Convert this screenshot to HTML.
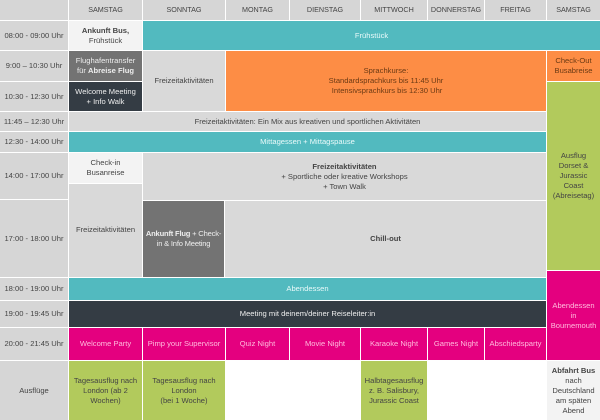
<!DOCTYPE html><html><head><meta charset="utf-8"><style>
body{margin:0;width:600px;height:420px;background:#fff;overflow:hidden;font-family:"Liberation Sans",sans-serif;font-size:7.6px;color:#444}
.c{position:absolute;display:flex;align-items:center;justify-content:center;text-align:center;line-height:10px;box-sizing:border-box;padding:0 2px}
.g{background:#d9d9d9}.h{background:#d6d6d6;font-size:7.2px}.t{background:#d6d6d6}
.tl{background:#52babf;color:#eafafa}.or{background:#fd8d45;color:#6b3a14}.dk{background:#343c44;color:#eee}
.pk{background:#e4007f;color:#fbd}.gr{background:#b2ca5c;color:#444}.dg{background:#737373;color:#eee}.lt{background:#f3f3f3}
b{font-weight:bold}
</style></head><body>
<div class="c h" style="left:0;top:0;width:68px;height:20px"></div>
<div class="c h" style="left:69px;top:0;width:73px;height:20px">SAMSTAG</div>
<div class="c h" style="left:143px;top:0;width:82px;height:20px">SONNTAG</div>
<div class="c h" style="left:226px;top:0;width:63px;height:20px">MONTAG</div>
<div class="c h" style="left:290px;top:0;width:70px;height:20px">DIENSTAG</div>
<div class="c h" style="left:361px;top:0;width:66px;height:20px">MITTWOCH</div>
<div class="c h" style="left:428px;top:0;width:56px;height:20px">DONNERSTAG</div>
<div class="c h" style="left:485px;top:0;width:61px;height:20px">FREITAG</div>
<div class="c h" style="left:547px;top:0;width:53px;height:20px">SAMSTAG</div>

<div class="c t" style="left:0;top:21px;width:68px;height:29px">08:00 - 09:00 Uhr</div>
<div class="c t" style="left:0;top:51px;width:68px;height:30px">9:00 – 10:30 Uhr</div>
<div class="c t" style="left:0;top:82px;width:68px;height:29px">10:30 - 12:30 Uhr</div>
<div class="c t" style="left:0;top:112px;width:68px;height:19px">11:45 – 12:30 Uhr</div>
<div class="c t" style="left:0;top:132px;width:68px;height:20px">12:30 - 14:00 Uhr</div>
<div class="c t" style="left:0;top:153px;width:68px;height:46px">14:00 - 17:00 Uhr</div>
<div class="c t" style="left:0;top:200px;width:68px;height:77px">17:00 - 18:00 Uhr</div>
<div class="c t" style="left:0;top:278px;width:68px;height:22px">18:00 - 19:00 Uhr</div>
<div class="c t" style="left:0;top:301px;width:68px;height:26px">19:00 - 19:45 Uhr</div>
<div class="c t" style="left:0;top:328px;width:68px;height:32px">20:00 - 21:45 Uhr</div>
<div class="c t" style="left:0;top:361px;width:68px;height:59px">Ausflüge</div>

<div class="c lt" style="left:69px;top:21px;width:73px;height:29px"><span><b>Ankunft Bus,</b><br>Frühstück</span></div>
<div class="c tl" style="left:143px;top:21px;width:457px;height:29px">Frühstück</div>
<div class="c dg" style="left:69px;top:51px;width:73px;height:30px"><span>Flughafentransfer<br>für <b>Abreise Flug</b></span></div>
<div class="c dk" style="left:69px;top:82px;width:73px;height:29px"><span>Welcome Meeting<br>+ Info Walk</span></div>
<div class="c g" style="left:143px;top:51px;width:82px;height:60px">Freizeitaktivitäten</div>
<div class="c or" style="left:226px;top:51px;width:320px;height:60px"><span>Sprachkurse:<br>Standardsprachkurs bis 11:45 Uhr<br>&nbsp;Intensivsprachkurs bis 12:30 Uhr</span></div>
<div class="c or" style="left:547px;top:51px;width:53px;height:30px"><span>Check-Out<br>Busabreise</span></div>
<div class="c gr" style="left:547px;top:82px;width:53px;height:188px"><span>Ausflug<br>Dorset &amp;<br>Jurassic<br>Coast<br>(Abreisetag)</span></div>
<div class="c g" style="left:69px;top:112px;width:477px;height:19px">Freizeitaktivitäten: Ein Mix aus kreativen und sportlichen Aktivitäten</div>
<div class="c tl" style="left:69px;top:132px;width:477px;height:20px">Mittagessen + Mittagspause</div>
<div class="c lt" style="left:69px;top:153px;width:73px;height:30px"><span>Check-in<br>Busanreise</span></div>
<div class="c g" style="left:69px;top:184px;width:73px;height:93px;align-items:flex-start;padding-top:41px">Freizeitaktivitäten</div>
<div class="c g" style="left:143px;top:153px;width:403px;height:47px"><span><b>Freizeitaktivitäten</b><br>+ Sportliche oder kreative Workshops<br>+ Town Walk</span></div>
<div class="c dg" style="left:143px;top:201px;width:81px;height:76px;padding:0;letter-spacing:-0.2px"><span><b>Ankunft Flug</b> + Check-<br>in &amp; Info Meeting</span></div>
<div class="c g" style="left:225px;top:201px;width:321px;height:76px"><b>Chill-out</b></div>
<div class="c tl" style="left:69px;top:278px;width:477px;height:22px">Abendessen</div>
<div class="c dk" style="left:69px;top:301px;width:477px;height:26px">Meeting mit deinem/deiner Reiseleiter:in</div>
<div class="c pk" style="left:547px;top:271px;width:53px;height:89px"><span>Abendessen<br>in<br>Bournemouth</span></div>
<div class="c pk" style="left:69px;top:328px;width:73px;height:32px">Welcome Party</div>
<div class="c pk" style="left:143px;top:328px;width:82px;height:32px">Pimp your Supervisor</div>
<div class="c pk" style="left:226px;top:328px;width:63px;height:32px">Quiz Night</div>
<div class="c pk" style="left:290px;top:328px;width:70px;height:32px">Movie Night</div>
<div class="c pk" style="left:361px;top:328px;width:66px;height:32px">Karaoke Night</div>
<div class="c pk" style="left:428px;top:328px;width:56px;height:32px">Games Night</div>
<div class="c pk" style="left:485px;top:328px;width:61px;height:32px">Abschiedsparty</div>
<div class="c gr" style="left:69px;top:361px;width:73px;height:59px"><span>Tagesausflug nach<br>London (ab 2<br>Wochen)</span></div>
<div class="c gr" style="left:143px;top:361px;width:82px;height:59px"><span>Tagesausflug nach<br>London<br>(bei 1 Woche)</span></div>
<div class="c gr" style="left:361px;top:361px;width:66px;height:59px"><span>Halbtagesausflug<br>z. B. Salisbury,<br>Jurassic Coast</span></div>
<div class="c lt" style="left:547px;top:361px;width:53px;height:59px"><span><b>Abfahrt Bus</b><br>nach<br>Deutschland<br>am späten<br>Abend</span></div>
</body></html>
